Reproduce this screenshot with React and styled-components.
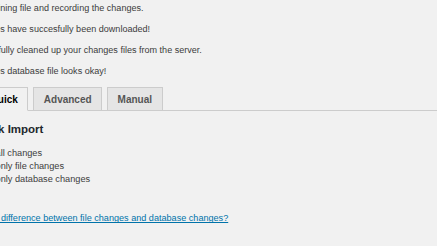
import React from "react";
import styled, { createGlobalStyle } from "styled-components";

const GlobalStyle = createGlobalStyle`
  html, body {
    margin: 0;
    padding: 0;
    background: #f1f1f1;
    overflow: hidden;
  }
  body {
    font-family: "Liberation Sans", Arial, sans-serif;
    color: #3c3c3c;
  }
`;

const Page = styled.div`
  margin-left: -31.5px;
  padding-top: 2px;
  width: 520px;
`;

const Notice = styled.p`
  margin: 0 0 9px;
  font-size: 9.05px;
  line-height: 12px;
  color: #3c3c3c;
`;

const TabBar = styled.div`
  display: flex;
  margin-top: 10px;
  padding-left: 11px;
  border-bottom: 1px solid #ccc;
`;

const Tab = styled.div`
  box-sizing: border-box;
  height: 24px;
  padding: 4px 9.5px 0;
  margin-right: 5px;
  margin-bottom: -1px;
  border: 1px solid #ccc;
  border-bottom: 1px solid ${(p) => (p.$active ? "#f1f1f1" : "#ccc")};
  background: ${(p) => (p.$active ? "#f1f1f1" : "#e5e5e5")};
  color: ${(p) => (p.$active ? "#000" : "#555")};
  font-size: 10px;
  font-weight: 700;
  line-height: 16px;
`;

const Section = styled.div`
  padding-top: 10.5px;
`;

const Heading = styled.h3`
  margin: 0 0 11px;
  padding-left: 4px;
  font-size: 11.5px;
  line-height: 14px;
  font-weight: 700;
  color: #23282d;
`;

const OptionList = styled.div`
  display: flex;
  flex-direction: column;
  margin-left: -1.5px;
`;

const Option = styled.label`
  font-size: 9.2px;
  line-height: 13.3px;
  color: #3c3c3c;
`;

const HelpLine = styled.p`
  margin: 26px 0 0 -1.5px;
  font-size: 9.1px;
  line-height: 13.3px;
`;

const HelpLink = styled.a`
  color: #0073aa;
  text-decoration: underline;
`;

const notices = [
  "Determining file and recording the changes.",
  "Changes have succesfully been downloaded!",
  "Succesfully cleaned up your changes files from the server.",
  "Changes database file looks okay!",
];

const tabs = ["Quick", "Advanced", "Manual"];

const options = [
  "Import all changes",
  "Import only file changes",
  "Import only database changes",
];

export default function App() {
  return (
    <>
      <GlobalStyle />
      <Page>
        {notices.map((n) => (
          <Notice key={n}>{n}</Notice>
        ))}
        <TabBar>
          {tabs.map((t) => (
            <Tab key={t} $active={t === "Quick"}>
              {t}
            </Tab>
          ))}
        </TabBar>
        <Section>
          <Heading>Quick Import</Heading>
          <OptionList>
            {options.map((o) => (
              <Option key={o}>{o}</Option>
            ))}
          </OptionList>
          <HelpLine>
            <HelpLink href="#">
              See the difference between file changes and database changes?
            </HelpLink>
          </HelpLine>
        </Section>
      </Page>
    </>
  );
}
